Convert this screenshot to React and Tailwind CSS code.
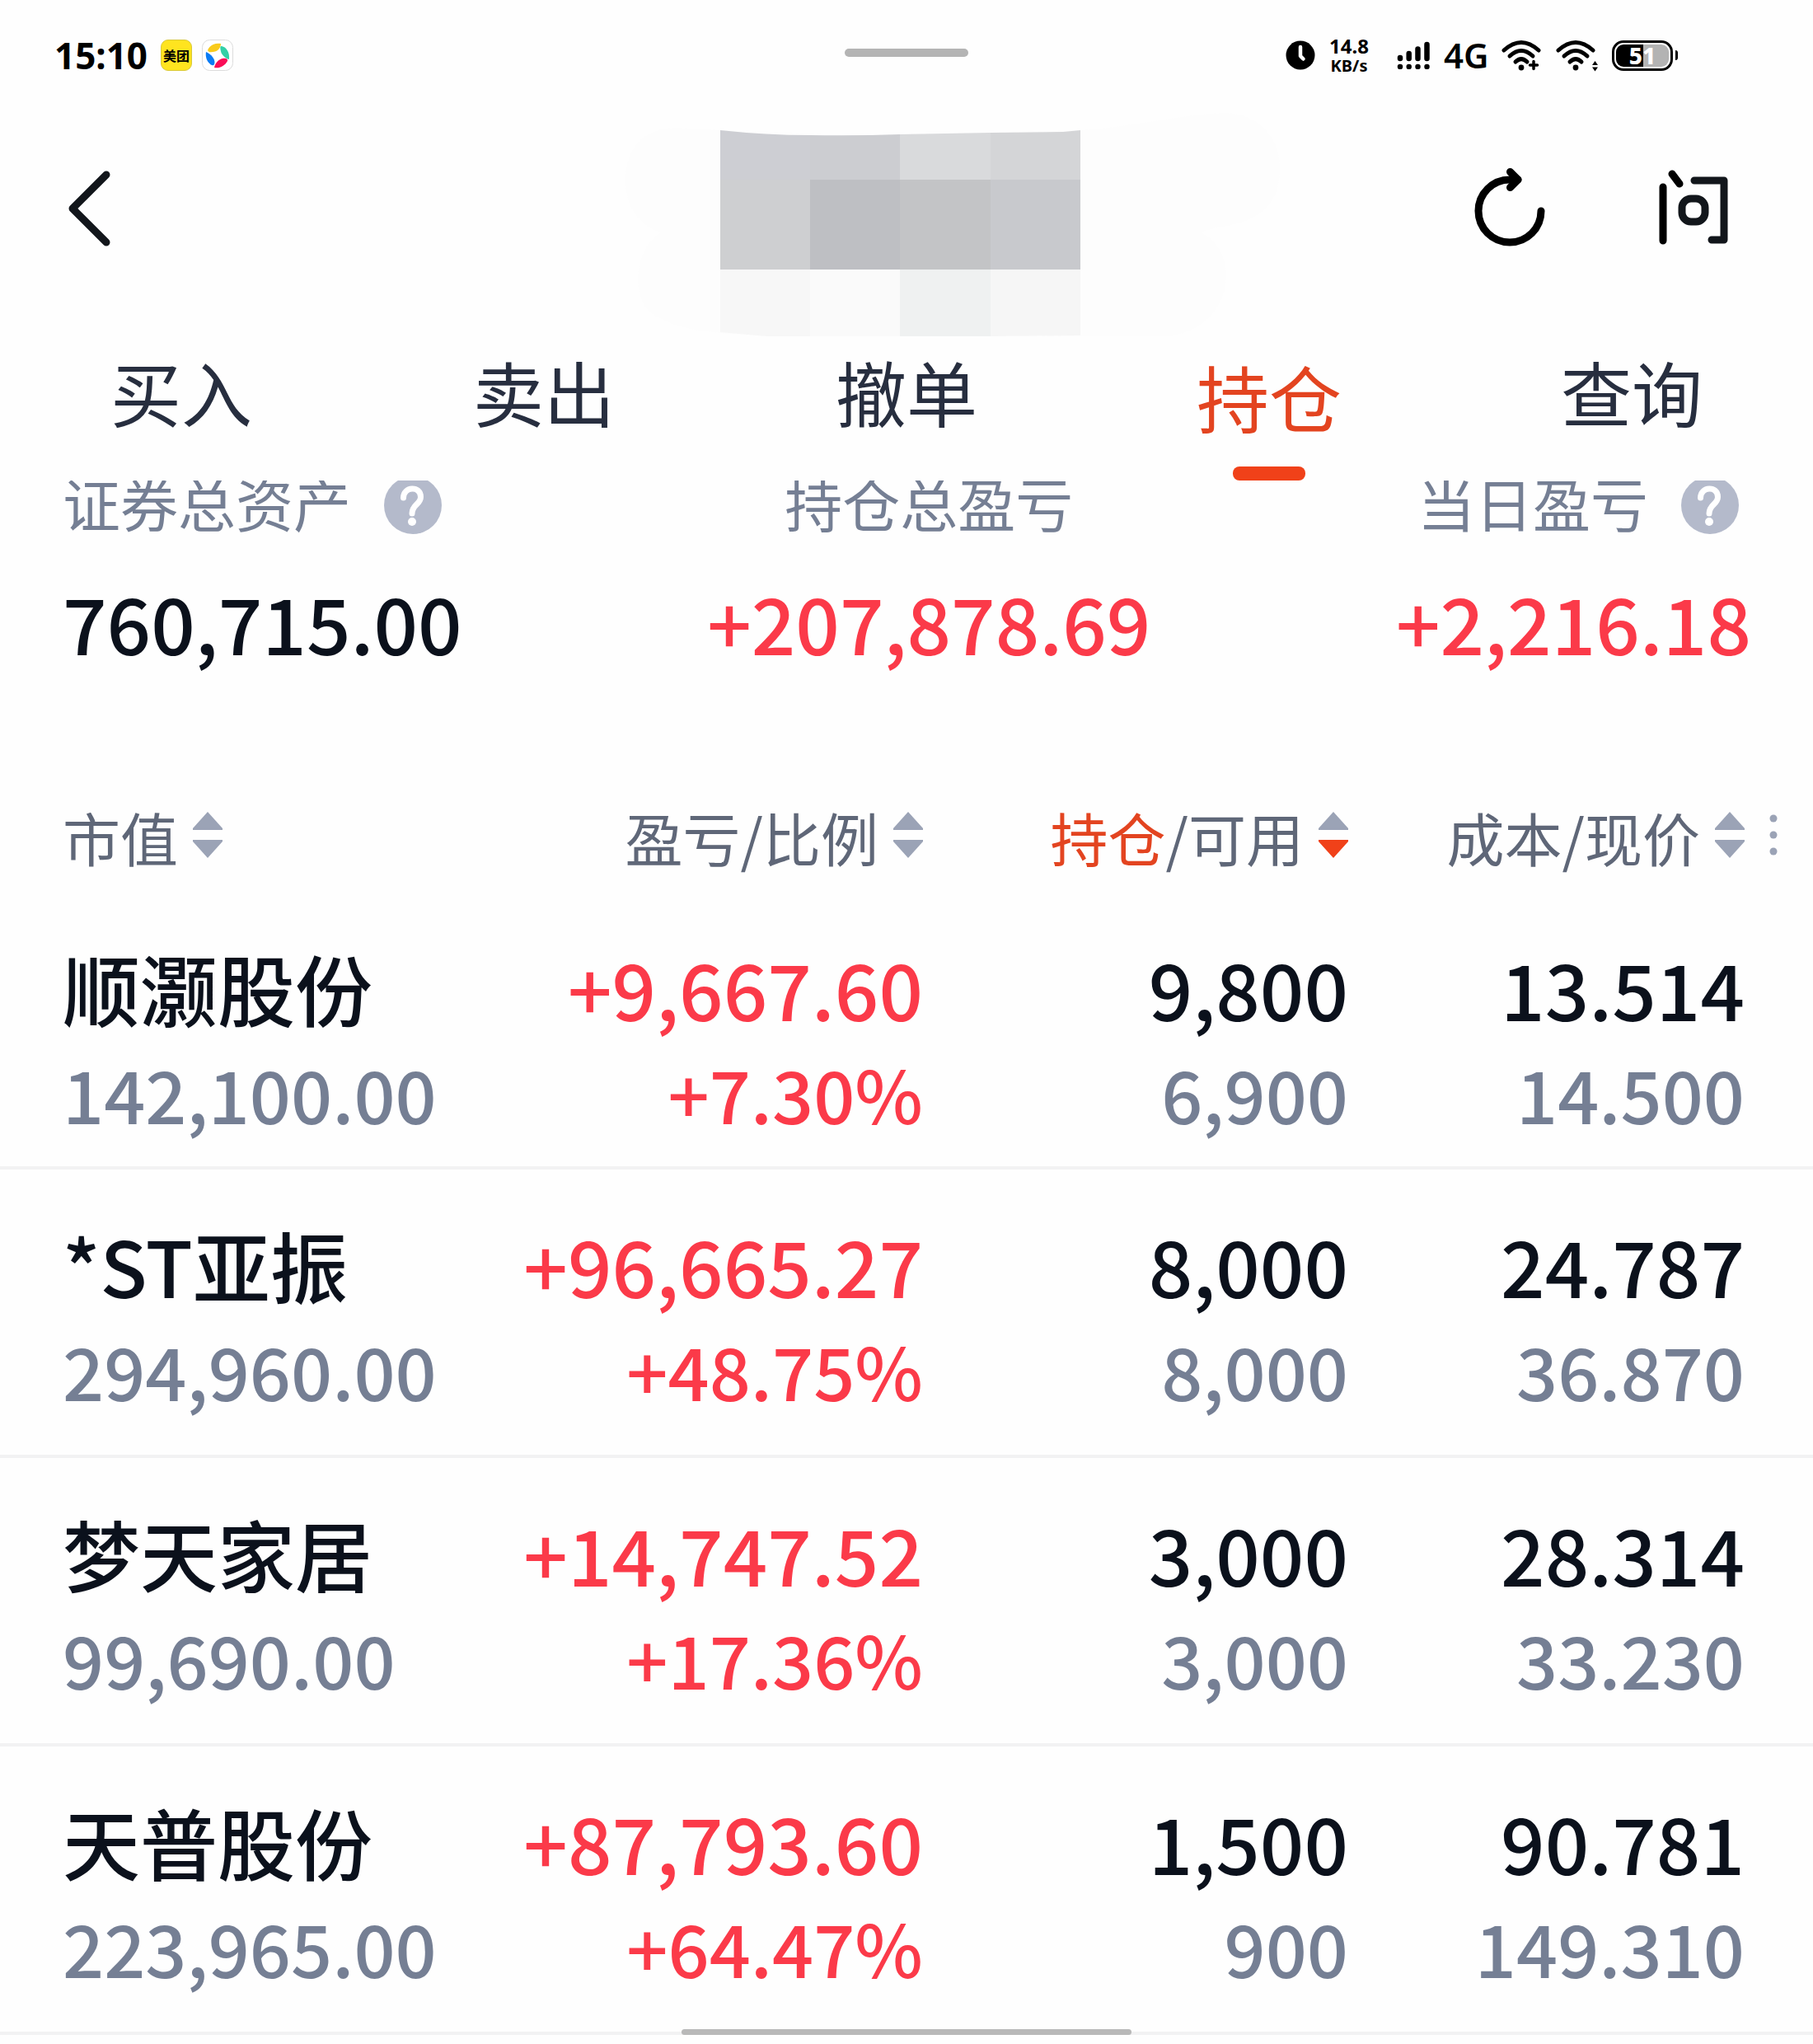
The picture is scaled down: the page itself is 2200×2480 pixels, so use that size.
import { useState } from "react";

const TABS = ["买入", "卖出", "撤单", "持仓", "查询"];

const HOLDINGS = [
    { name: "顺灏股份", value: "142,100.00", profit: "+9,667.60", ratio: "+7.30%", held: "9,800", usable: "6,900", cost: "13.514", price: "14.500" },
    { name: "*ST亚振", value: "294,960.00", profit: "+96,665.27", ratio: "+48.75%", held: "8,000", usable: "8,000", cost: "24.787", price: "36.870" },
    { name: "梦天家居", value: "99,690.00", profit: "+14,747.52", ratio: "+17.36%", held: "3,000", usable: "3,000", cost: "28.314", price: "33.230" },
    { name: "天普股份", value: "223,965.00", profit: "+87,793.60", ratio: "+64.47%", held: "1,500", usable: "900", cost: "90.781", price: "149.310" },
];

function WifiArcs() {
    return (
        <>
            <path d="M3 14 Q24 -5 45 14" fill="none" stroke="#000" strokeWidth="5" strokeLinecap="round" />
            <path d="M10 21 Q24 8 38 21" fill="none" stroke="#000" strokeWidth="5" strokeLinecap="round" />
            <path d="M17 28 Q24 21 31 28" fill="none" stroke="#000" strokeWidth="5" strokeLinecap="round" />
            <circle cx="24" cy="35" r="3.4" />
        </>
    );
}

function StatusBar() {
    return (
        <div className="relative flex h-[134px] items-center justify-between pr-[164px] pl-[66px] font-['Noto_Sans','Noto_Sans_CJK_SC',sans-serif] text-black">
            <div className="flex items-center">
                <span className="text-[44px] leading-[44px] font-bold">15:10</span>
                <span className="ml-4 flex h-[38px] w-[38px] items-center justify-center rounded-[9px] border border-[#d9c93a] bg-[#ffe41f] font-['Noto_Sans_CJK_SC',sans-serif] text-[16px] leading-[20px] font-bold">
                    美团
                </span>
                <svg className="ml-3" width="38" height="38" viewBox="0 0 38 38">
                    <rect x="0.5" y="0.5" width="37" height="37" rx="9" fill="#fff" stroke="#dcdcdc" />
                    <path d="M7 13 C9 7 16 3.500 23 5 C23 9 20 14 16 14.500 C12 15.500 8 16 7 13Z" fill="#f9cb1c" />
                    <path d="M24 8 C30 9 34 16 33 24 C28 23 23 17 23 14 C22 10 22 7.500 24 8Z" fill="#33d0a6" />
                    <path d="M15 34 C16 29 20 24 25 23 C29 22 32 24 31 26 C28 32 21 35.500 15 34Z" fill="#fa0d57" />
                    <path d="M5 15 C10 17 15 22 15.500 27 C15.500 31 14 32 12 31 C6 28 4 21 5 15Z" fill="#0b7cf5" />
                </svg>
            </div>

            <div className="absolute top-[59px] left-1/2 h-[10px] w-[150px] -translate-x-1/2 rounded-full bg-[#b4b4b4]" />

            <div className="flex items-center">
                <svg width="36" height="36" viewBox="0 0 36 36">
                    <circle cx="18" cy="18" r="17.500" />
                    <path d="M18 8 V19 L21.500 22.500" fill="none" stroke="#fff" strokeWidth="4.500" strokeLinecap="round" strokeLinejoin="round" />
                </svg>
                <div className="ml-4 flex w-[50px] flex-col items-center pt-[2px] font-bold">
                    <span className="text-[24px] leading-[24px]">14.8</span>
                    <span className="text-[20px] leading-[24px]">KB/s</span>
                </div>
                <svg className="ml-[33px]" width="40" height="34" viewBox="0 0 40 34" stroke="#000" strokeWidth="6.500" strokeLinecap="round">
                    <path d="M4 31 h0.010 M14.700 31 h0.010 M25.500 31 h0.010 M36.500 31 h0.010 M4 20 v1 M14.700 15 v6 M25.500 9.500 v11.500 M36.500 4 v17" />
                </svg>
                <span className="ml-[17px] w-[56px] text-[42px] leading-[44px] font-semibold">4G</span>
                <svg className="ml-[14px]" width="50" height="40" viewBox="0 0 50 40">
                    <WifiArcs />
                    <path d="M34.500 32 h9 M39 27.500 v9" stroke="#000" strokeWidth="3.500" strokeLinecap="round" />
                </svg>
                <svg className="ml-4" width="52" height="40" viewBox="0 0 52 40">
                    <WifiArcs />
                    <path d="M44 32 L47.500 27 L51 32Z M44 34.500 L47.500 39.500 L51 34.500Z" />
                </svg>
                <div className="ml-4 flex items-center">
                    <div className="flex h-[37px] w-[74px] rounded-[14px] border-[3px] border-black p-[2px]">
                        <div className="flex flex-1 items-center justify-center rounded-[9px] bg-[linear-gradient(90deg,#000_52%,#b3b3b3_52%)] text-[28px] leading-[28px] font-extrabold text-white">
                            51
                        </div>
                    </div>
                    <div className="ml-[3px] h-[12px] w-[3px] rounded-r-full bg-black" />
                </div>
            </div>
        </div>
    );
}

function HiddenAccount() {
    return (
        <svg width="906" height="274" viewBox="647 134 906 274">
            <path
                d="M822 155 C780 155 759 180 759 219 C759 250 776 275 802 282 C770 300 765 360 790 380 C820 400 860 405 940 408 H1420 C1465 400 1488 370 1488 333 C1488 310 1475 290 1457 282 C1480 270 1553 280 1553 204 C1553 160 1520 137 1485 137 C1440 138 1360 156 1311 158 L1200 161 L1030 164 L874 158 Z"
                fill="#fdfdfd"
            />
            <path d="M874 158 Q930 164 983 164 V218 H874Z" fill="#cdced3" />
            <path d="M983 164 Q1040 165 1092 163 V218 H983Z" fill="#cccdd1" />
            <path d="M1092 163 L1202 161 V218 H1092Z" fill="#d9dadc" />
            <path d="M1202 161 L1290 160 L1311 158 V218 H1202Z" fill="#d4d5d7" />
            <path d="M874 218 H983 V327 H874Z" fill="#cecfd1" />
            <path d="M983 218 H1092 V327 H983Z" fill="#bebfc3" />
            <path d="M1092 218 H1202 V327 H1092Z" fill="#c3c4c6" />
            <path d="M1202 218 H1311 V327 H1202Z" fill="#c8c9cd" />
            <path d="M874 327 H983 V408 L930 408 L874 403Z" fill="#f7f7f7" />
            <path d="M983 327 H1092 V408 H983Z" fill="#fafafa" />
            <path d="M1092 327 H1202 V408 H1092Z" fill="#eff1f1" />
            <path d="M1202 327 H1311 V407 L1202 408Z" fill="#f6f6f6" />
        </svg>
    );
}

function Header() {
    return (
        <header className="grid h-[274px] grid-cols-[1fr_auto_1fr] items-start px-[76px]">
            <button aria-label="返回" className="mt-[66px] w-[68px]">
                <svg width="68" height="108" viewBox="0 0 68 108" fill="none" stroke="#12161b" strokeWidth="9" strokeLinecap="round" strokeLinejoin="round">
                    <path d="M53 12 L12 53 L53 94" />
                </svg>
            </button>
            <HiddenAccount />
            <div className="mt-[66px] flex justify-end gap-[138px] pr-[27px]">
                <button aria-label="刷新">
                    <svg width="100" height="108" viewBox="0 0 100 108" fill="none" stroke="#000" strokeWidth="9" strokeLinecap="round" strokeLinejoin="round">
                        <path d="M95 56 A38 38 0 1 1 57 18 H67" />
                        <path d="M57.500 8.500 L67 18 L57.500 27.500" />
                    </svg>
                </button>
                <button aria-label="问">
                    <svg width="84" height="108" viewBox="0 0 84 108" fill="none" strokeWidth="9" strokeLinecap="round" strokeLinejoin="round">
                        <path d="M5 27 V92 M16 11 L25 23" stroke="#000" />
                        <path d="M43 19 H79 V91 H64" stroke="#12161b" />
                        <rect x="28" y="41" width="28" height="28" rx="11" stroke="#12161b" />
                    </svg>
                </button>
            </div>
        </header>
    );
}

function HelpDot() {
    return (
        <button aria-label="说明" className="h-[70px] w-[70px]">
            <svg width="70" height="70" viewBox="0 0 70 70">
                <circle cx="35" cy="35" r="35" fill="#b4bacb" />
                <path d="M23.500 26 C23.500 12 44.500 11 44.500 25 C44.500 34 34 34 34 45" fill="none" stroke="#fff" strokeWidth="7" strokeLinecap="round" />
                <circle cx="34" cy="55" r="5" fill="#fff" />
            </svg>
        </button>
    );
}

function Sorter({ children, active }) {
    return (
        <button className="inline-flex items-center gap-[18px] align-top">
            <span>{children}</span>
            <svg className="mb-[6px]" width="36" height="56" viewBox="0 0 36 56">
                <path d="M18 0 L36 20 V22 H0 V20Z" fill="#9ba3b6" />
                <path d="M18 56 L36 36 V34 H0 V36Z" fill={active ? "#f04119" : "#9ba3b6"} />
            </svg>
        </button>
    );
}

function HoldingRow({ item, first }) {
    const pad = first ? "pt-[78px] pb-[25px]" : "pt-[51px] pb-[39px]";
    return (
        <tr className="border-b-4 border-[#f2f2f3] text-right text-[94px] leading-[128px] font-medium text-[#0b111c]">
            <td className={`${pad} pl-[76px] text-left`}>
                <div>{item.name}</div>
                <div className="text-[88px] text-[#757f94]">{item.value}</div>
            </td>
            <td className={`${pad} text-[#fb3a49]`}>
                <div>{item.profit}</div>
                <div className="text-[88px]">{item.ratio}</div>
            </td>
            <td className={pad}>
                <div>{item.held}</div>
                <div className="text-[88px] text-[#757f94]">{item.usable}</div>
            </td>
            <td className={pad}>
                <div>{item.cost}</div>
                <div className="text-[88px] text-[#757f94]">{item.price}</div>
            </td>
            <td />
        </tr>
    );
}

export default function App() {
    const [tab, setTab] = useState("持仓");

    return (
        <div className="relative min-h-screen overflow-hidden bg-[#fefefe] font-['Noto_Sans_CJK_SC',sans-serif]">
            <StatusBar />
            <Header />

            {/* Tabs */}
            <nav className="grid h-[175px] grid-cols-5">
                {TABS.map((t) => (
                    <button
                        key={t}
                        onClick={() => setTab(t)}
                        className={`relative flex items-start justify-center pt-5 ${
                            t === tab ? "text-[88px] leading-[104px] text-[#e34420]" : "text-[86px] leading-[94px] text-[#272e3f]"
                        }`}
                    >
                        {t}
                        {t === tab && (
                            <span className="absolute bottom-0 left-1/2 h-[17px] w-[88px] -translate-x-1/2 rounded-[8px] bg-[#f04119]" />
                        )}
                    </button>
                ))}
            </nav>

            {/* Summary, scrolled a little way under the tabs */}
            <section className="overflow-hidden pb-10">
                <div className="-mt-[5px] flex justify-between pr-[75px] pl-[76px] text-[70px] leading-[64px] text-[#757f94]">
                    <div>
                        <div className="flex h-[70px] gap-10">
                            证券总资产
                            <HelpDot />
                        </div>
                        <div className="mt-[42px] text-[94px] leading-[128px] font-medium text-[#0b111c]">760,715.00</div>
                    </div>
                    <div className="text-center">
                        <div className="h-[70px]">持仓总盈亏</div>
                        <div className="mt-[42px] text-[94px] leading-[128px] font-medium text-[#fb3a49]">+207,878.69</div>
                    </div>
                    <div className="flex flex-col items-end">
                        <div className="flex h-[70px] gap-10 pr-[15px]">
                            当日盈亏
                            <HelpDot />
                        </div>
                        <div className="mt-[42px] text-[94px] leading-[128px] font-medium text-[#fb3a49]">+2,216.18</div>
                    </div>
                </div>
            </section>

            {/* Holdings */}
            <table className="mt-[118px] w-full table-fixed border-collapse">
                <colgroup>
                    <col />
                    <col className="w-[560px]" />
                    <col className="w-[516px]" />
                    <col className="w-[481px]" />
                    <col className="w-[83px]" />
                </colgroup>
                <thead>
                    <tr className="text-right text-[70px] leading-[80px] text-[#5f6778]">
                        <th className="pl-[76px] text-left font-normal">
                            <Sorter>市值</Sorter>
                        </th>
                        <th className="font-normal">
                            <Sorter>盈亏/比例</Sorter>
                        </th>
                        <th className="font-normal">
                            <Sorter active>
                                <span className="text-[#e34420]">持仓</span>/可用
                            </Sorter>
                        </th>
                        <th className="font-normal">
                            <Sorter>成本/现价</Sorter>
                        </th>
                        <th className="pl-[30px] text-left">
                            <button aria-label="更多" className="mb-[6px] block">
                                <svg width="10" height="50" viewBox="0 0 10 50" fill="#9ba3b6">
                                    <circle cx="5" cy="5" r="4.500" />
                                    <circle cx="5" cy="25" r="4.500" />
                                    <circle cx="5" cy="45" r="4.500" />
                                </svg>
                            </button>
                        </th>
                    </tr>
                </thead>
                <tbody>
                    {HOLDINGS.map((item, i) => (
                        <HoldingRow key={item.name} item={item} first={i === 0} />
                    ))}
                </tbody>
            </table>

            <div className="absolute bottom-[11px] left-1/2 h-[7px] w-[546px] -translate-x-1/2 rounded-full bg-[#b9b9b9]" />
        </div>
    );
}
